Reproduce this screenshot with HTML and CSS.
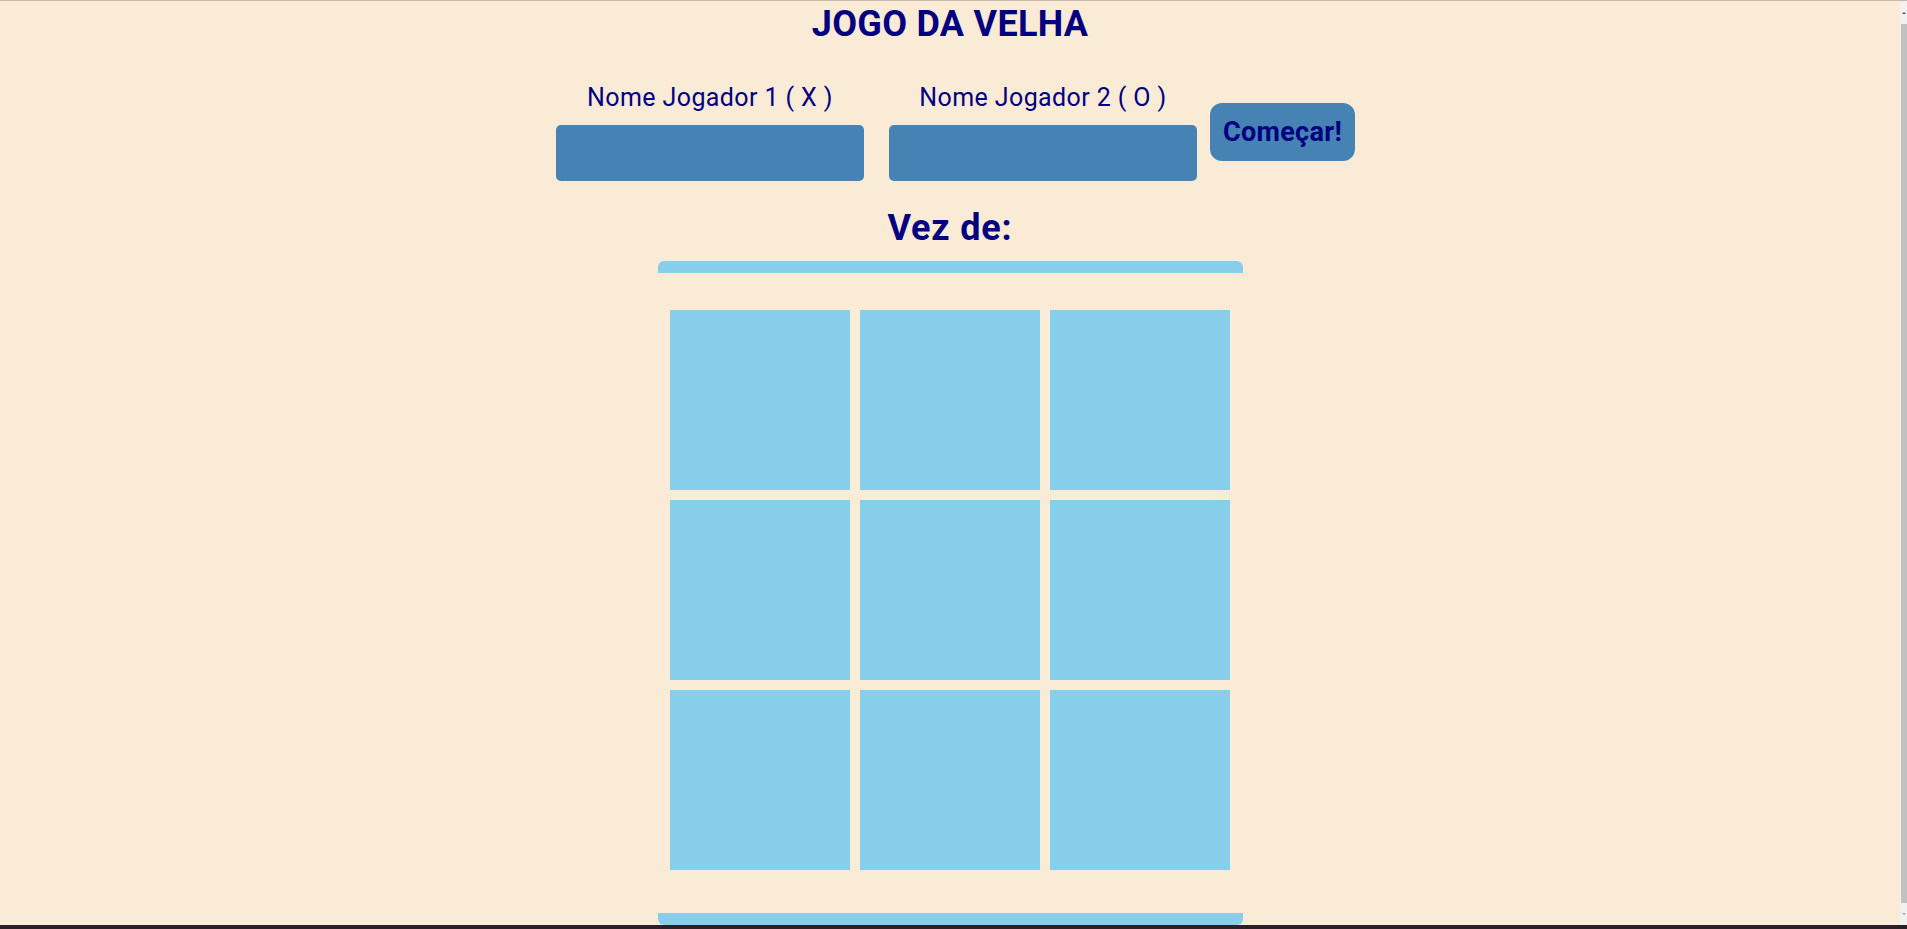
FILE: index.html
```html
<!DOCTYPE html>
<html lang="pt">
<head>
<meta charset="utf-8">
<title>Jogo da Velha</title>
<link rel="stylesheet" href="styles.css">
</head>
<body>
<div class="topline"></div>
<div class="window">
  <main class="page">
    <h1 class="title">JOGO DA VELHA</h1>
    <div class="dot"></div>
    <form class="players">
      <div class="field field-1">
        <label class="label" for="p1">Nome Jogador 1 ( X )</label>
        <input class="input" id="p1" type="text">
      </div>
      <div class="field field-2">
        <label class="label" for="p2">Nome Jogador 2 ( O )</label>
        <input class="input" id="p2" type="text">
      </div>
      <button class="start" type="button">Começar!</button>
    </form>
    <h2 class="turn">Vez de:</h2>
    <section class="board">
      <div class="grid">
        <div class="cell"></div>
        <div class="cell"></div>
        <div class="cell"></div>
        <div class="cell"></div>
        <div class="cell"></div>
        <div class="cell"></div>
        <div class="cell"></div>
        <div class="cell"></div>
        <div class="cell"></div>
      </div>
    </section>
  </main>
  <div class="scrollbar">
    <div class="sb-btn sb-up"><span class="arrow-up"></span></div>
    <div class="sb-thumb"></div>
    <div class="sb-btn sb-down"><span class="arrow-down"></span></div>
  </div>
</div>
<div class="taskbar"></div>
</body>
</html>
```

FILE: styles.css
```css
* {
  box-sizing: border-box;
}

html, body {
  margin: 0;
  padding: 0;
  height: 100%;
}

body {
  display: flex;
  flex-direction: column;
  overflow: hidden;
  background: #faebd7;
  color: #000080;
  font-family: Roboto, "Liberation Sans", sans-serif;
}

.topline {
  height: 1px;
  background: #c8b6ad;
  flex: none;
}

.window {
  flex: 1;
  display: flex;
  min-height: 0;
}

.page {
  flex: 1;
  display: flex;
  flex-direction: column;
  align-items: center;
}

.title {
  margin: 2px 0 0;
  font-size: 36px;
  line-height: 42px;
  font-weight: 700;
  letter-spacing: 0.3px;
}

.dot {
  width: 1px;
  height: 1px;
  margin-top: 11px;
  background: #a8a0a0;
}

.players {
  display: flex;
  align-items: center;
  margin: 27px 0 0;
  padding-left: 11px;
}

.field {
  width: 308px;
  display: flex;
  flex-direction: column;
  align-items: center;
}

.field-1 {
  margin-right: 25px;
}

.field-2 {
  margin-right: 13px;
}

.label {
  font-size: 25px;
  line-height: 29px;
  margin-bottom: 13px;
  letter-spacing: 0.4px;
}

.input {
  width: 308px;
  height: 56px;
  border: none;
  border-radius: 5px;
  background: #4682b4;
  outline: none;
}

.start {
  width: 145px;
  height: 58px;
  padding: 0;
  border: none;
  border-radius: 12px;
  background: #4682b4;
  color: #000080;
  font-family: Roboto, "Liberation Sans", sans-serif;
  font-size: 27px;
  font-weight: 700;
  letter-spacing: 0.3px;
}

.turn {
  margin: 27px 0 12px;
  font-size: 36px;
  line-height: 41px;
  font-weight: 700;
  letter-spacing: 0.8px;
}

.board {
  width: 585px;
  border-top: 12px solid #87ceeb;
  border-bottom: 12px solid #87ceeb;
  border-radius: 6px;
  padding: 37px 12px 43px 12px;
}

.grid {
  display: grid;
  grid-template-columns: repeat(3, 180px);
  grid-auto-rows: 180px;
  gap: 10px;
}

.cell {
  background: #87ceeb;
}

.scrollbar {
  width: 7px;
  flex: none;
  display: flex;
  flex-direction: column;
  background: #f1f1f1;
}

.sb-btn {
  display: flex;
  justify-content: center;
  flex: none;
}

.sb-up {
  height: 23px;
  align-items: center;
}

.sb-down {
  height: 22px;
  align-items: center;
}

.sb-thumb {
  flex: 1;
  margin-left: 1px;
  background: #c1c1c1;
}

.arrow-up {
  width: 0;
  height: 0;
  border-left: 2px solid transparent;
  border-right: 2px solid transparent;
  border-bottom: 2px solid #505050;
}

.arrow-down {
  width: 0;
  height: 0;
  border-left: 2px solid transparent;
  border-right: 2px solid transparent;
  border-top: 2px solid #a0a0a0;
}

.taskbar {
  height: 4px;
  flex: none;
  background: #2b2028;
}
```
